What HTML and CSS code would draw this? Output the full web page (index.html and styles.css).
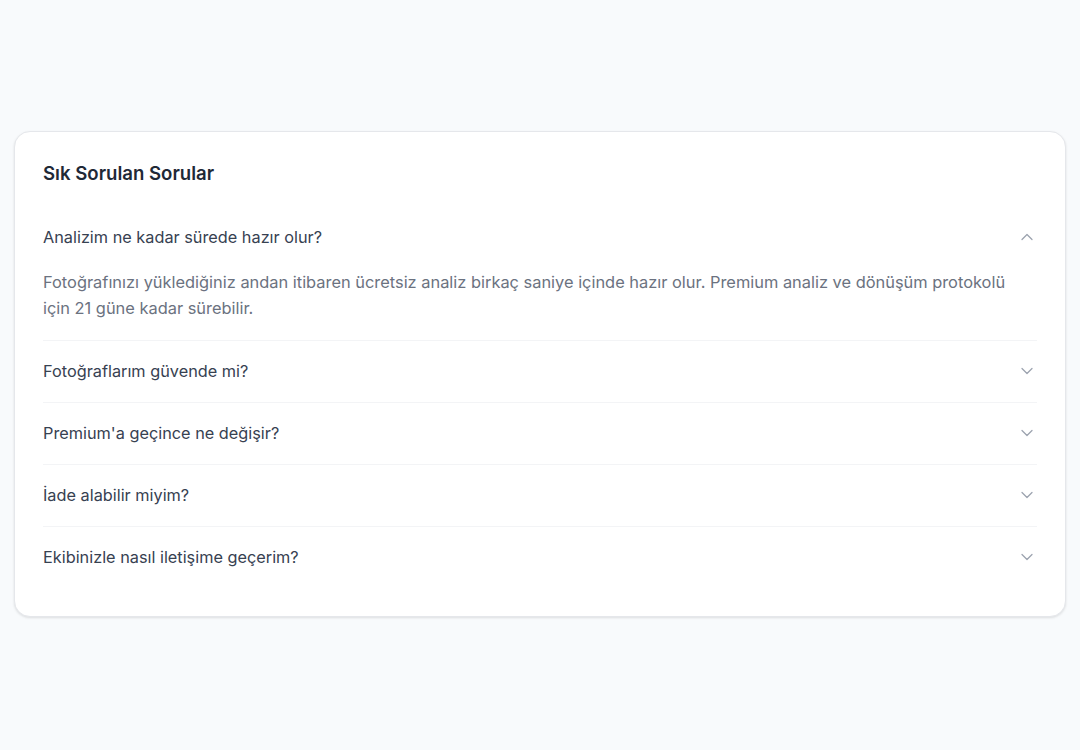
FILE: index.html
```html
<!DOCTYPE html>
<html lang="tr">
<head>
  <meta charset="UTF-8" />
  <meta name="viewport" content="width=device-width, initial-scale=1.0" />
  <title>Sık Sorulan Sorular</title>
  <link rel="stylesheet" href="styles.css">
</head>
<body>
  <main>
    <section class="faq-card">
      <h2>Sık Sorulan Sorular</h2>

      <div class="faq-item open">
        <button class="faq-question">
          <span>Analizim ne kadar sürede hazır olur?</span>
          <svg class="chevron" viewBox="0 0 24 24"><path d="M6 15l6-6 6 6" /></svg>
        </button>
        <p class="faq-answer">Fotoğrafınızı yüklediğiniz andan itibaren ücretsiz analiz birkaç saniye içinde hazır olur. Premium analiz ve dönüşüm protokolü için 21 güne kadar sürebilir.</p>
      </div>

      <div class="faq-item">
        <button class="faq-question">
          <span>Fotoğraflarım güvende mi?</span>
          <svg class="chevron" viewBox="0 0 24 24"><path d="M6 9l6 6 6-6" /></svg>
        </button>
      </div>

      <div class="faq-item">
        <button class="faq-question">
          <span>Premium'a geçince ne değişir?</span>
          <svg class="chevron" viewBox="0 0 24 24"><path d="M6 9l6 6 6-6" /></svg>
        </button>
      </div>

      <div class="faq-item">
        <button class="faq-question">
          <span>İade alabilir miyim?</span>
          <svg class="chevron" viewBox="0 0 24 24"><path d="M6 9l6 6 6-6" /></svg>
        </button>
      </div>

      <div class="faq-item">
        <button class="faq-question">
          <span>Ekibinizle nasıl iletişime geçerim?</span>
          <svg class="chevron" viewBox="0 0 24 24"><path d="M6 9l6 6 6-6" /></svg>
        </button>
      </div>
    </section>
  </main>
</body>
</html>
```

FILE: styles.css
```css
body {
  font-family: Inter, "Noto Sans", sans-serif;
  background: #f8fafc;
  margin: 0;
  color: #1f2937;
}
main {
  min-height: 100vh;
  display: flex;
  align-items: center;
  padding: 0 14px 2px;
  box-sizing: border-box;
}
.faq-card {
  flex: 1;
  background: #fff;
  border: 1px solid #e5e7eb;
  border-radius: 16px;
  padding: 28px;
  box-shadow: 0 1px 3px rgba(0,0,0,0.08), 0 1px 2px rgba(0,0,0,0.04);
}
.faq-card h2 {
  margin: 0 0 20px;
  font-size: 18.6px;
  line-height: 26px;
  font-weight: 600;
  color: #1f2937;
}
.faq-item {
  border-bottom: 1px solid #f3f4f6;
}
.faq-item:last-child {
  border-bottom: none;
}
.faq-question {
  display: flex;
  width: 100%;
  align-items: center;
  justify-content: space-between;
  padding: 18.5px 0;
  background: none;
  border: none;
  font: inherit;
  font-size: 16.3px;
  line-height: 24px;
  color: #374151;
  text-align: left;
  cursor: pointer;
}
.chevron {
  width: 20px;
  height: 20px;
  fill: none;
  stroke: #9ca3af;
  stroke-width: 1.5;
  stroke-linecap: round;
  stroke-linejoin: round;
}
.faq-answer {
  margin: 0;
  padding: 1.5px 16px 19px 0;
  font-size: 16.4px;
  line-height: 26px;
  color: #6b7280;
}
```
